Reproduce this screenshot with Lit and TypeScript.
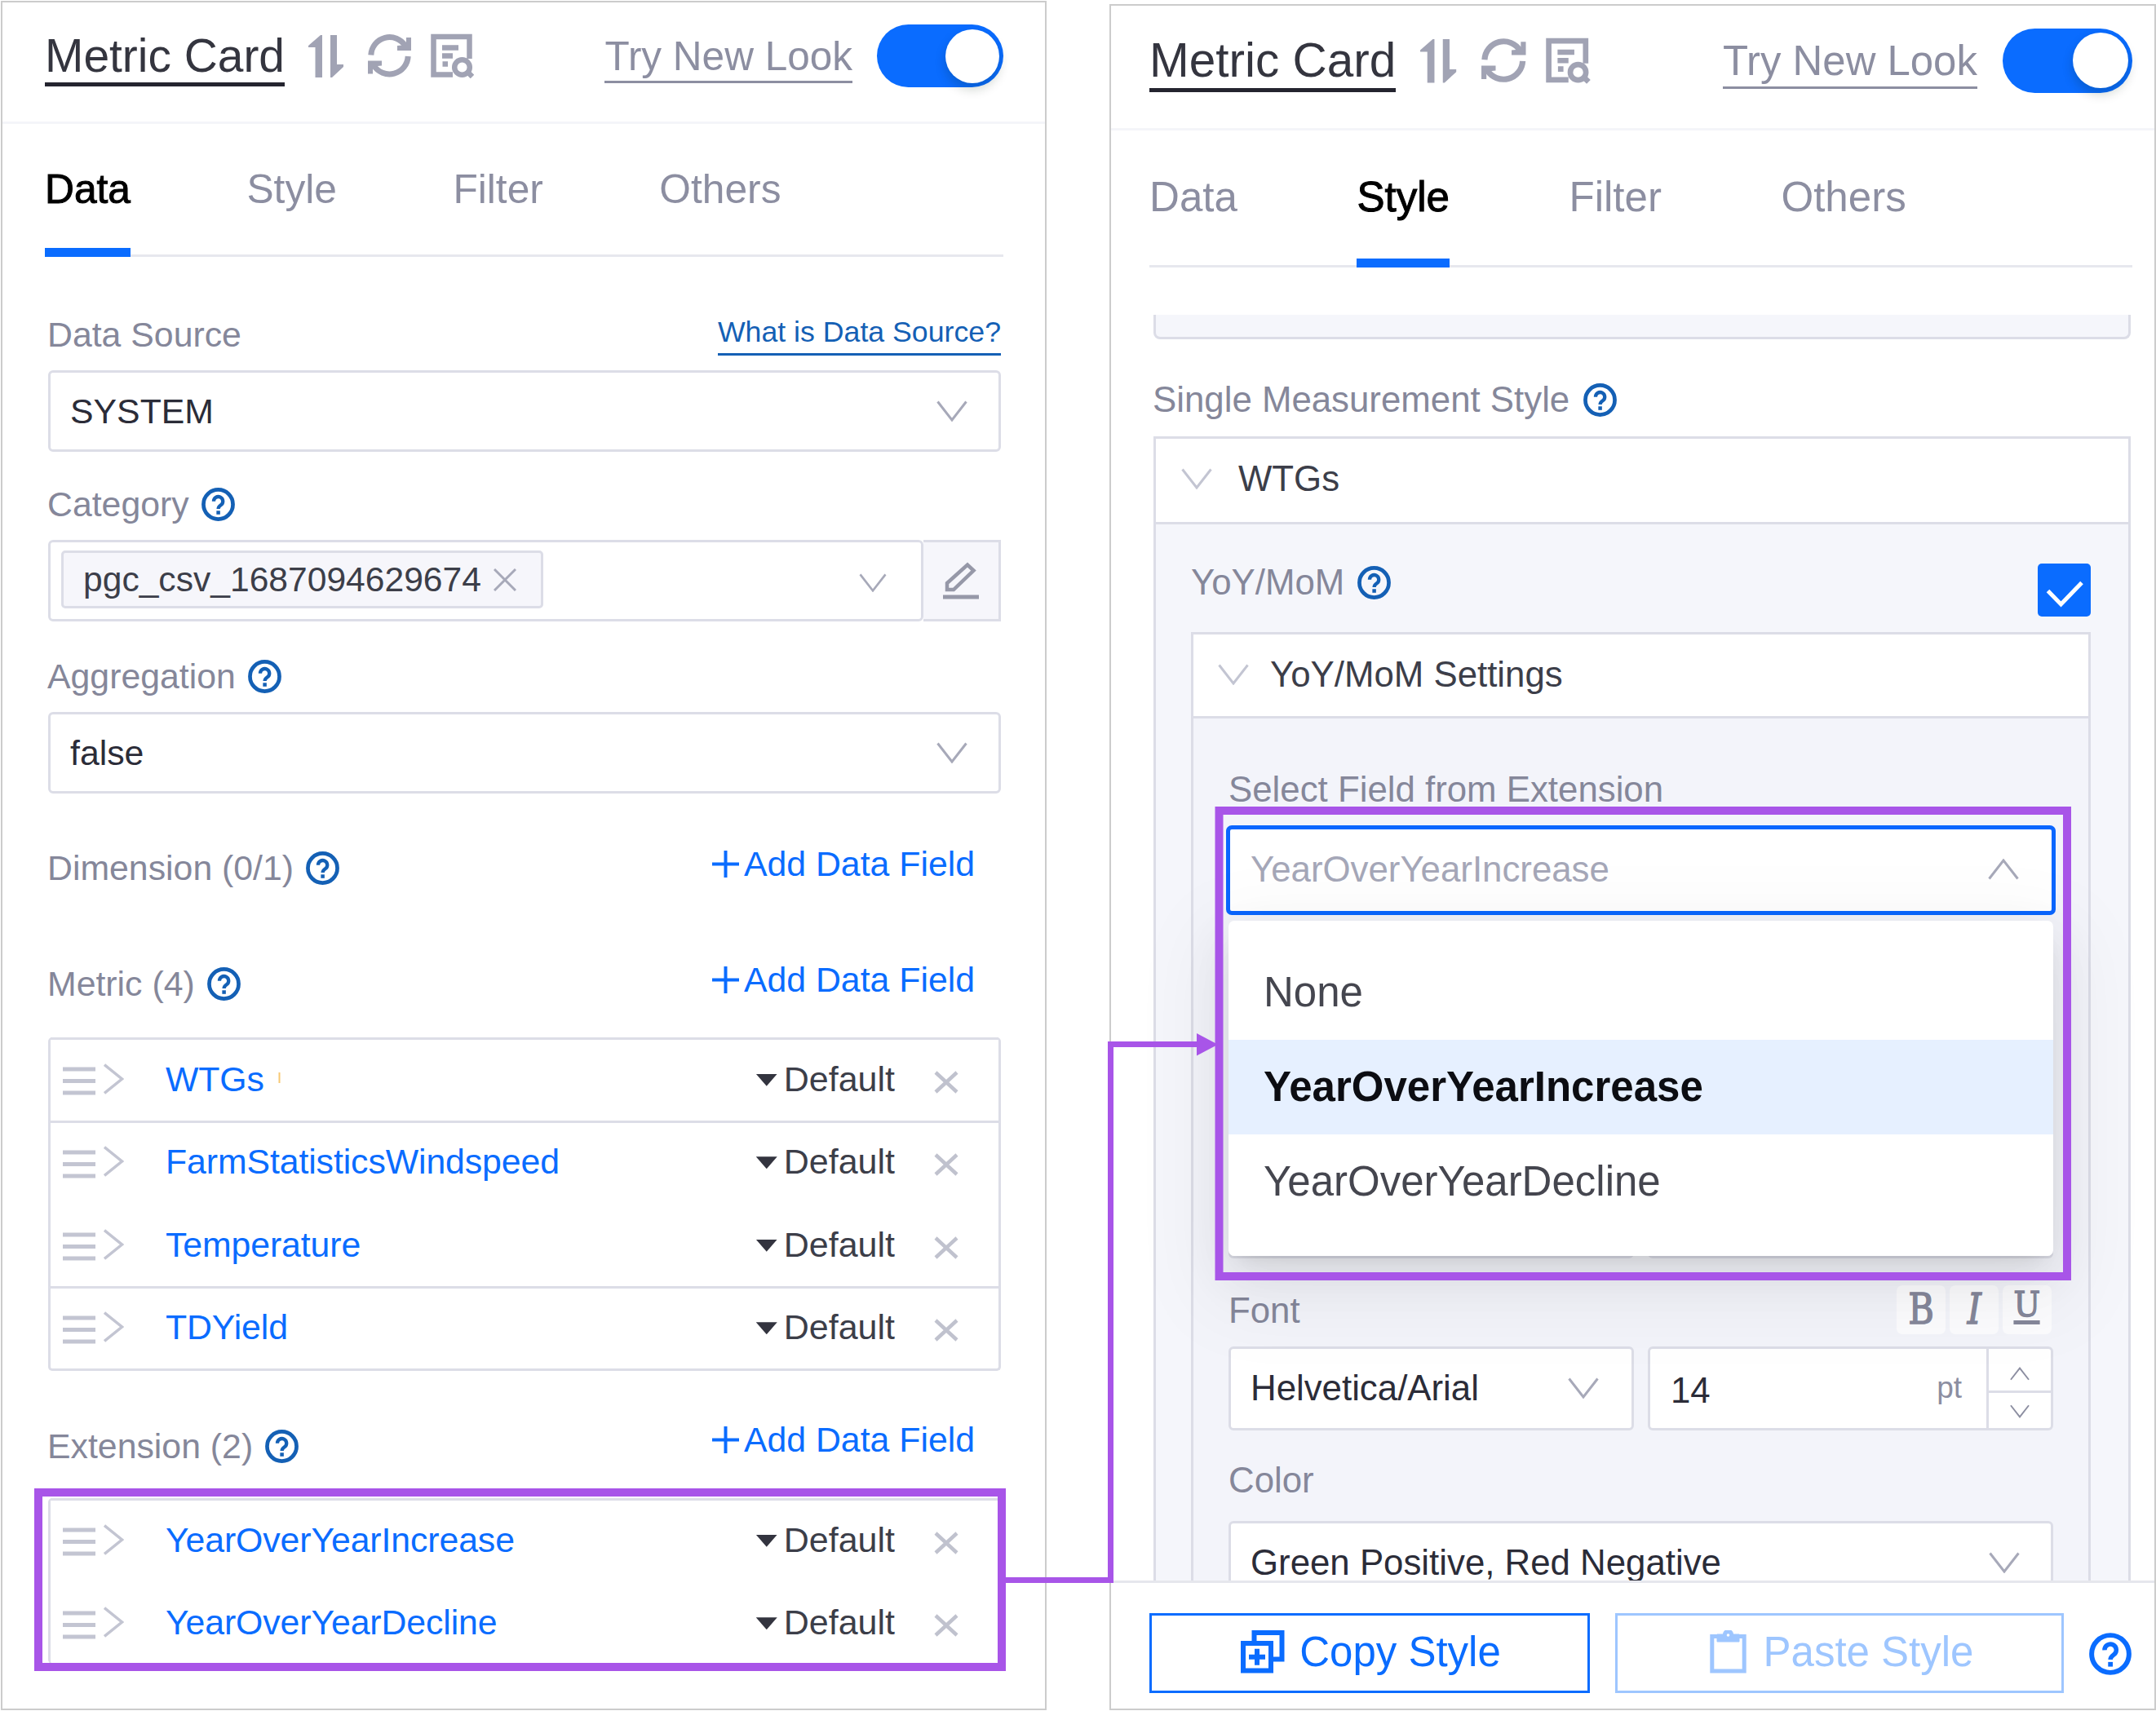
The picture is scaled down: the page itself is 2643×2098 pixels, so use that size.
import { html, css, LitElement } from 'lit';
import { customElement, property } from 'lit/decorators.js';
import { classMap } from 'lit/directives/class-map.js';

const FONT = css`'Liberation Sans', Arial, Helvetica, sans-serif`;

@customElement('help-icon')
class HelpIcon extends LitElement {
  static styles = css`
    :host {
      display: block;
      width: 41px;
      height: 41px;
      color: #1460b5;
    }

    svg {
      display: block;
      width: 100%;
      height: 100%;
    }
  `;

  render() {
    return html`
      <svg viewBox="0 0 40 40" fill="none" stroke="currentColor">
        <circle cx="20" cy="20" r="17.6" stroke-width="4.6" />
        <path d="M14.6 16.4a5.5 5.5 0 1 1 8.6 4.4c-2 1.4-3.1 2.2-3.1 4.6" stroke-width="4.2" />
        <path d="M20.1 27.6v4.4" stroke-width="4.4" />
      </svg>
    `;
  }
}

@customElement('chevron-icon')
class ChevronIcon extends LitElement {
  static styles = css`
    :host {
      display: block;
      width: 38px;
      height: 26px;
      color: #a7a9b9;
    }

    :host([up]) {
      transform: scaleY(-1);
    }

    svg {
      display: block;
      width: 100%;
      height: 100%;
    }
  `;

  render() {
    return html`
      <svg viewBox="0 0 38 26" fill="none" stroke="currentColor" stroke-width="3">
        <path d="M1.5 1.5 19 24 36.500 1.5" />
      </svg>
    `;
  }
}

@customElement('panel-header')
class PanelHeader extends LitElement {
  static styles = css`
    :host {
      display: block;
      --u: 1px;
      font-family: ${FONT};
    }

    :host([large]) {
      --u: 1.028px;
    }

    .bar {
      display: flex;
      align-items: flex-start;
      box-sizing: border-box;
      height: calc(149 * var(--u));
      padding: 0 var(--pad-right) 0 var(--pad-left);
      border-bottom: 3px solid #f4f5f9;
    }

    .title {
      margin-top: calc(33 * var(--u));
      font-size: calc(56.900 * var(--u));
      line-height: calc(65 * var(--u));
      border-bottom: calc(5.500 * var(--u)) solid #24242f;
      color: #34353f;
      white-space: nowrap;
    }

    .tools {
      display: flex;
      gap: calc(27 * var(--u));
      margin: calc(38 * var(--u)) auto 0 calc(29 * var(--u));
      color: #a1a3b4;
    }

    .tools svg {
      display: block;
      height: calc(55 * var(--u));
    }

    .tools svg:last-child {
      margin-left: -4px;
    }

    .try {
      margin-top: calc(36 * var(--u));
      font-size: calc(49.500 * var(--u));
      line-height: calc(60 * var(--u));
      border-bottom: 3px solid #8c8ea1;
      color: #8c8ea1;
      white-space: nowrap;
    }

    .toggle {
      display: flex;
      justify-content: flex-end;
      align-items: center;
      box-sizing: border-box;
      width: calc(155 * var(--u));
      height: calc(77 * var(--u));
      margin: calc(27 * var(--u)) 0 0 calc(30 * var(--u));
      padding: calc(5 * var(--u));
      border-radius: calc(40 * var(--u));
      background: #0a6cff;
    }

    .knob {
      width: calc(66 * var(--u));
      height: calc(66 * var(--u));
      border-radius: 50%;
      background: #ffffff;
      box-shadow: 0 7px 14px rgba(0, 35, 11, 0.2);
    }

    .tabs {
      display: flex;
      gap: calc(142.500 * var(--u));
      box-sizing: border-box;
      height: calc(163 * var(--u));
      margin: 0 var(--pad-right) 0 var(--pad-left);
      border-bottom: 3px solid #e7e8ee;
    }

    .tab {
      box-sizing: border-box;
      height: calc(163 * var(--u));
      padding-top: calc(49.500 * var(--u));
      font-size: calc(49.700 * var(--u));
      line-height: calc(60 * var(--u));
      color: #8c8ea1;
    }

    .tab.active {
      color: #000000;
      border-bottom: calc(11 * var(--u)) solid #0a6cff;
      -webkit-text-stroke: 1px #000000;
    }
  `;

  @property() active = '';
  @property({ type: Boolean, reflect: true }) large = false;

  tabs = ['Data', 'Style', 'Filter', 'Others'];

  render() {
    return html`
      <div class="bar">
        <span class="title">Metric Card</span>
        <div class="tools">
          <svg viewBox="0 -2 45 55" fill="currentColor">
            <path d="M15 0h2v52H8.500V15H0v-2z" />
            <path d="M27 0h8v36h8v3L29 52h-2z" />
          </svg>
          <svg viewBox="0 0 55 55">
            <g fill="none" stroke="currentColor" stroke-width="7">
              <path d="M4.800 26.500A22.800 22.800 0 0 1 47 15.500" />
              <path d="M50.200 28A22.800 22.800 0 0 1 8 39" />
            </g>
            <g fill="currentColor">
              <path d="M48 5h6v16H37v-6l11-1z" />
              <path d="M7 49.500H1v-16h17v6l-11 1z" />
            </g>
          </svg>
          <svg viewBox="0 0 53 55" fill="none" stroke="currentColor" stroke-width="6.500">
            <path d="M47.500 31V4H3.500v46.500H27" />
            <path d="M14 17.500h20M14 27.500h13M14.500 37.500h6.500" />
            <circle cx="38.500" cy="41.500" r="9.300" />
            <path d="M45 47l6 6" />
          </svg>
        </div>
        <span class="try">Try New Look</span>
        <span class="toggle"><span class="knob"></span></span>
      </div>
      <div class="tabs">
        ${this.tabs.map((tab) => html`<span class=${classMap({ tab: true, active: tab === this.active })}>${tab}</span>`)}
      </div>
    `;
  }
}

@customElement('field-table')
class FieldTable extends LitElement {
  static styles = css`
    :host {
      display: block;
      box-sizing: border-box;
      border: 3px solid #dcdde7;
      border-top: none;
      border-radius: 5px;
      font-family: ${FONT};
      font-size: 43px;
    }

    :host([open]) {
      border-bottom: none;
    }

    .row {
      display: flex;
      align-items: center;
      box-sizing: border-box;
      height: 101.500px;
      padding: 0 49px 3px 15px;
      border-top: 3px solid #dcdde7;
      color: #3c3e49;
    }

    .row.merged {
      border-top-color: transparent;
    }

    .grip {
      display: block;
      width: 40px;
      height: 35px;
      margin: 6px 10px 0 0;
      color: #c3c5d2;
    }

    .expand {
      display: block;
      width: 25px;
      height: 38px;
      color: #c3c5d2;
    }

    .name {
      margin-left: 51px;
      color: #0a6cff;
      font-size: 42.800px;
      letter-spacing: -0.1px;
      white-space: nowrap;
    }

    .caret {
      width: 26px;
      height: 15px;
      margin: 3px 8px 0 auto;
      background: #33343f;
      clip-path: polygon(0 0, 100% 0, 50% 100%);
    }

    .close {
      display: block;
      width: 30px;
      height: 28px;
      margin: 8px 0 0 48px;
      color: #c0c2ce;
    }
  `;

  @property({ type: Array }) rows: string[] = [];
  @property({ type: Array }) merged: number[] = [];

  render() {
    return this.rows.map((name, i) => html`
      <div class=${classMap({ row: true, merged: this.merged.includes(i) })}>
        <svg class="grip" viewBox="0 0 40 35" stroke="currentColor" stroke-width="5">
          <path d="M0 3h40M0 17.500h40M0 32h40" />
        </svg>
        <svg class="expand" viewBox="0 0 25 38" fill="none" stroke="currentColor" stroke-width="3.500">
          <path d="M1 1.500 22.500 19 1 36.500" />
        </svg>
        <span class="name">${name}</span>
        <span class="caret"></span>
        <span>Default</span>
        <svg class="close" viewBox="0 0 30 28" stroke="currentColor" stroke-width="4.500">
          <path d="M2 2l26 24M28 2 2 26" />
        </svg>
      </div>
    `);
  }
}

@customElement('app-root')
class AppRoot extends LitElement {
  static styles = css`
    :host {
      display: flex;
      position: relative;
      box-sizing: border-box;
      width: 2643px;
      height: 2098px;
      padding: 1px 0 1px 1px;
      overflow: hidden;
      background: #ffffff;
      font-family: ${FONT};
      font-size: 42.800px;
      line-height: 50px;
    }

    .panel {
      display: flex;
      flex-direction: column;
      box-sizing: border-box;
      border: 2.500px solid #cccccc;
      background: #ffffff;
    }

    .left {
      --pad-left: 52px;
      --pad-right: 51px;
      width: 1282px;
      height: 2096px;
    }

    .right {
      --pad-left: 47px;
      --pad-right: 27px;
      width: 1283px;
      height: 2092px;
      margin: 4px 0 0 77px;
      font-size: 43.800px;
    }

    .fields {
      padding: 70px 54px 0 56px;
    }

    .line {
      display: flex;
      align-items: flex-start;
      height: 50px;
      color: #85879a;
    }

    .label {
      margin-left: -1px;
      white-space: nowrap;
    }

    .line help-icon {
      margin: 5px 0 0 15px;
    }

    .link {
      margin: -3px 0 0 auto;
      border-bottom: 3px solid #1460b5;
      color: #1460b5;
      font-size: 35.700px;
      line-height: 51px;
    }

    .add {
      display: flex;
      align-items: center;
      gap: 6px;
      margin: -5px 32px 0 auto;
      color: #0a6cff;
    }

    .add.raised {
      margin-top: -8px;
    }

    .add svg {
      display: block;
      width: 33px;
      height: 33px;
    }

    .select {
      display: flex;
      align-items: center;
      box-sizing: border-box;
      height: 100px;
      padding: 0 38px 0 24px;
      border: 3px solid #dcdde7;
      border-radius: 6px;
      background: #ffffff;
      color: #2b2c38;
      white-space: nowrap;
    }

    .select chevron-icon {
      margin-left: auto;
    }

    .g19 {
      margin-top: 19px;
    }

    .g39 {
      margin-top: 39px;
    }

    .g41 {
      margin-top: 41px;
    }

    .g42 {
      margin-top: 42px;
    }

    .g66 {
      margin-top: 66px;
    }

    .g92 {
      margin-top: 92px;
    }

    .g67 {
      margin-top: 67px;
    }

    .category {
      display: flex;
    }

    .category .select {
      width: 1073px;
      padding: 0 42px 0 13px;
    }

    .category chevron-icon {
      width: 34px;
      height: 23px;
      margin-top: 4px;
    }

    .tag {
      display: flex;
      align-items: center;
      box-sizing: border-box;
      width: 591px;
      height: 71px;
      margin-top: -4px;
      padding-left: 24px;
      border: 3px solid #dcdde7;
      border-radius: 5px;
      background: #f6f6fb;
      color: #3c3e49;
      font-size: 42.600px;
    }

    .tag svg {
      display: block;
      width: 28px;
      height: 28px;
      margin: 2px 0 0 15px;
      color: #a7a9b9;
    }

    .edit {
      display: flex;
      align-items: center;
      justify-content: center;
      box-sizing: border-box;
      flex: 1;
      border: 3px solid #dcdde7;
      border-left: none;
      background: #f6f6fb;
      color: #9698a8;
    }

    .edit svg {
      display: block;
      width: 44px;
      height: 46px;
    }

    .scroll {
      flex: 1;
      margin-top: 58px;
      padding: 0 29px 0 52px;
      overflow: hidden;
    }

    .previous {
      box-sizing: border-box;
      height: 30px;
      border: 3px solid #dcdde7;
      border-top: none;
      border-radius: 0 0 8px 8px;
      background: #f5f6fb;
    }

    .scroll > .line {
      margin-top: 49px;
    }

    .scroll > .line help-icon {
      margin-left: 17px;
    }

    .group {
      margin-top: 20px;
      border: 3px solid #dcdde7;
      background: #f5f6fb;
    }

    .group .group {
      margin-top: 36px;
      background: #f3f4fa;
    }

    .group-title {
      display: flex;
      align-items: center;
      box-sizing: border-box;
      height: 105px;
      padding: 0 0 3px 31px;
      border-bottom: 3px solid #dcdde7;
      background: #ffffff;
      color: #3c3e49;
    }

    .group-title chevron-icon {
      margin-right: 32px;
      color: #c3c5d2;
    }

    .group .group .group-title {
      height: 103px;
      padding: 0 0 1px 30px;
    }

    .group .group .group-title chevron-icon {
      margin-right: 26px;
    }

    .group-body {
      padding: 46px 46px 0 43px;
    }

    .group .group .group-body {
      padding: 62px 43px 0 43px;
    }

    .group .line .label {
      margin-left: 0;
    }

    .group .line help-icon {
      margin-left: 16px;
    }

    .checkbox {
      box-sizing: border-box;
      width: 65px;
      height: 65px;
      margin: 2px 0 0 auto;
      border-radius: 5px;
      background: #0a6cff;
    }

    .checkbox svg {
      display: block;
    }

    .picker {
      position: relative;
      margin: 19px -3px 0;
    }

    .picker .select {
      height: 110px;
      padding: 0 40px 2px 25px;
      border: 5px solid #0a66ff;
      border-radius: 7px;
      color: #a5a7b8;
    }

    .menu {
      position: absolute;
      top: 117px;
      left: 3px;
      right: 3px;
      z-index: 1;
      box-sizing: border-box;
      height: 411px;
      padding-top: 30px;
      border-radius: 7px;
      background: #ffffff;
      box-shadow: 0 11px 22px -15px rgba(0, 0, 0, 0.14), 0 22px 58px rgba(0, 0, 0, 0.08), 0 33px 102px 29px rgba(0, 0, 0, 0.05);
    }

    .option {
      padding-left: 43px;
      font-size: 51px;
      line-height: 116px;
      color: #45464f;
    }

    .option.selected {
      background: #e6f0ff;
      color: #0c0d12;
      font-weight: bold;
    }

    .pair {
      display: grid;
      grid-template-columns: 497px 497px;
      justify-content: space-between;
      margin-top: 19px;
    }

    .pair.covered {
      margin-top: 318px;
    }

    .group .select,
    .number {
      height: 103px;
    }

    .group .picker .select {
      height: 110px;
    }

    .pair .select {
      padding-right: 40px;
    }

    .number {
      display: flex;
      align-items: center;
      box-sizing: border-box;
      border: 3px solid #dcdde7;
      border-radius: 6px;
      background: #ffffff;
      color: #2b2c38;
    }

    .value {
      margin: 6px auto 0 25px;
    }

    .unit {
      margin-right: 30px;
      font-size: 37px;
      color: #8c8ea1;
    }

    .spin {
      display: flex;
      flex-direction: column;
      box-sizing: border-box;
      width: 79px;
      height: 100%;
      border-left: 3px solid #dcdde7;
    }

    .spin span {
      display: flex;
      flex: 1;
      align-items: center;
      justify-content: center;
      padding-top: 11px;
    }

    .spin span + span {
      padding: 2px 0 0;
      border-top: 3px solid #dcdde7;
    }

    .spin chevron-icon {
      width: 24px;
      height: 17px;
      color: #8c8ea1;
    }

    .styles {
      display: flex;
      gap: 5px;
      margin: -6px 2px 0 auto;
    }

    .styles span {
      display: flex;
      justify-content: center;
      width: 60px;
      height: 60px;
      border-radius: 7px;
      background: rgba(255, 255, 255, 0.7);
      color: #85879a;
      font-family: 'DejaVu Serif', serif;
      font-size: 52px;
      line-height: 58px;
    }

    .styles b,
    .styles i,
    .styles u {
      font-weight: normal;
      text-decoration: none;
      transform: scaleX(0.83);
      -webkit-text-stroke: 1.5px #85879a;
    }

    .styles u {
      height: 43px;
      font-size: 42px;
      line-height: 48px;
      border-bottom: 5px solid #85879a;
      transform: scaleX(0.92);
    }

    .color-label {
      margin-top: 36px;
    }

    .color-select {
      margin-top: 25px;
    }

    .footer {
      display: flex;
      align-items: flex-start;
      box-sizing: border-box;
      height: 157px;
      padding: 37px 28px 0 47px;
      border-top: 3px solid #e6e7ed;
      font-size: 51px;
    }

    .button {
      display: flex;
      align-items: center;
      justify-content: center;
      box-sizing: border-box;
      width: 540px;
      height: 98px;
      padding: 0 0 3px 3px;
      border: 3px solid #0a6cff;
      color: #0a6cff;
    }

    .button svg {
      display: block;
      margin-right: 18px;
    }

    .button.disabled {
      width: 550px;
      margin-left: 31px;
      padding-left: 5px;
      border-color: #9ec6ff;
      color: #9ec6ff;
    }

    .button.disabled svg {
      margin-right: 21px;
    }

    .footer help-icon {
      width: 52px;
      height: 52px;
      margin: 24px 0 0 auto;
      color: #0a6cff;
    }

    .notes {
      position: absolute;
      top: 0;
      left: 0;
      z-index: 2;
    }
  `;

  metrics = ['WTGs', 'FarmStatisticsWindspeed', 'Temperature', 'TDYield'];
  extensions = ['YearOverYearIncrease', 'YearOverYearDecline'];
  options = ['None', ...this.extensions];
  selected = 'YearOverYearIncrease';

  render() {
    return html`
      <section class="panel left">
        <panel-header active="Data"></panel-header>
        ${this.renderFields()}
      </section>
      <section class="panel right">
        <panel-header active="Style" large></panel-header>
        ${this.renderStyles()}
        ${this.renderFooter()}
      </section>
      ${this.renderNotes()}
    `;
  }

  renderFields() {
    return html`
      <div class="fields">
        <div class="line">
          <span class="label">Data Source</span>
          <span class="link">What is Data Source?</span>
        </div>
        <div class="select g19">SYSTEM<chevron-icon></chevron-icon></div>

        <div class="line g39"><span class="label">Category</span><help-icon></help-icon></div>
        <div class="category g19">
          <div class="select">
            <span class="tag">
              pgc_csv_1687094629674
              <svg viewBox="0 0 28 28" stroke="currentColor" stroke-width="3"><path d="M1 1l26 26M27 1 1 27" /></svg>
            </span>
            <chevron-icon></chevron-icon>
          </div>
          <div class="edit">
            <svg viewBox="0 0 44 46" fill="none" stroke="currentColor">
              <path d="M5 34v-8L30 3.500l7.500 7L13 34z" stroke-width="4.500" />
              <path d="M0 43h44" stroke-width="5" />
            </svg>
          </div>
        </div>

        <div class="line g42"><span class="label">Aggregation</span><help-icon></help-icon></div>
        <div class="select g19">false<chevron-icon></chevron-icon></div>

        ${this.renderFieldTitle('Dimension (0/1)', 'g66')}
        ${this.renderFieldTitle('Metric (4)', 'g92')}
        <field-table class="g41" .rows=${this.metrics} .merged=${[2]}></field-table>
        ${this.renderFieldTitle('Extension (2)', 'g67', true)}
        <field-table class="g39" open .rows=${this.extensions} .merged=${[1]}></field-table>
      </div>
    `;
  }

  renderFieldTitle(label: string, gap: string, raised = false) {
    return html`
      <div class="line ${gap}">
        <span class="label">${label}</span>
        <help-icon></help-icon>
        <span class=${classMap({ add: true, raised })}>
          <svg viewBox="0 0 33 33" stroke="currentColor" stroke-width="4"><path d="M16.500 0v33M0 16.500h33" /></svg>
          Add Data Field
        </span>
      </div>
    `;
  }

  renderStyles() {
    return html`
      <div class="scroll">
        <div class="previous"></div>
        <div class="line"><span class="label">Single Measurement Style</span><help-icon></help-icon></div>
        <div class="group">
          <div class="group-title"><chevron-icon></chevron-icon>WTGs</div>
          <div class="group-body">
            <div class="line">
              <span class="label">YoY/MoM</span>
              <help-icon></help-icon>
              <span class="checkbox">
                <svg viewBox="0 0 65 65" fill="none" stroke="#ffffff" stroke-width="5"><path d="M12.500 33.500 28.500 50 54 23.500" /></svg>
              </span>
            </div>
            <div class="group">
              <div class="group-title"><chevron-icon></chevron-icon>YoY/MoM Settings</div>
              <div class="group-body">
                ${this.renderPicker()}
                <div class="pair covered">
                  <div class="select"></div>
                  <div class="number"><span class="value"></span><span class="spin"></span></div>
                </div>
                ${this.renderFont()}
                <div class="line color-label"><span class="label">Color</span></div>
                <div class="select color-select">Green Positive, Red Negative<chevron-icon></chevron-icon></div>
              </div>
            </div>
          </div>
        </div>
      </div>
    `;
  }

  renderPicker() {
    return html`
      <div class="line"><span class="label">Select Field from Extension</span></div>
      <div class="picker">
        <div class="select">${this.selected}<chevron-icon up></chevron-icon></div>
        <div class="menu">
          ${this.options.map((option) => html`
            <div class=${classMap({ option: true, selected: option === this.selected })}>${option}</div>
          `)}
        </div>
      </div>
    `;
  }

  renderFont() {
    return html`
      <div class="line g39">
        <span class="label">Font</span>
        <div class="styles">
          <span><b>B</b></span>
          <span><i>I</i></span>
          <span><u>U</u></span>
        </div>
      </div>
      <div class="pair">
        <div class="select">Helvetica/Arial<chevron-icon></chevron-icon></div>
        <div class="number">
          <span class="value">14</span>
          <span class="unit">pt</span>
          <div class="spin">
            <span><chevron-icon up></chevron-icon></span>
            <span><chevron-icon></chevron-icon></span>
          </div>
        </div>
      </div>
    `;
  }

  renderFooter() {
    return html`
      <div class="footer">
        <div class="button">
          <svg width="54" height="53" viewBox="0 0 54 53" fill="none" stroke="currentColor" stroke-width="6">
            <path d="M16.500 14V3H50.500v32.500H39" />
            <path d="M3 16h34v33.500H3z" />
            <path d="M10 32.700h20M20 22.700v20" />
          </svg>
          Copy Style
        </div>
        <div class="button disabled">
          <svg width="45" height="53" viewBox="0 0 45 53" fill="none" stroke="currentColor">
            <path d="M2.800 7.500h39.400v42.500H2.800z" stroke-width="5" />
            <path d="M9 14V5h7.500a6 6 0 0 1 12 0H36v9z" fill="currentColor" />
            <circle cx="22.500" cy="6" r="1.800" fill="#ffffff" stroke="none" />
          </svg>
          Paste Style
        </div>
        <help-icon></help-icon>
      </div>
    `;
  }

  // Highlight frames and the arrow that links them
  renderNotes() {
    return html`
      <svg class="notes" width="2643" height="2098" viewBox="0 0 2643 2098" fill="none" stroke="#a855e8">
        <path d="M342.500 1315v13" stroke="#f7c873" stroke-width="2" />
        <rect x="47" y="1830" width="1181" height="214" stroke-width="10" />
        <rect x="1494.500" y="994" width="1039.500" height="571" stroke-width="10" />
        <path d="M1232 1937.500H1361.500V1280.500H1470" stroke-width="7" />
        <path d="M1467 1267v27.500l26-13.700z" fill="#a855e8" stroke="none" />
      </svg>
    `;
  }
}
